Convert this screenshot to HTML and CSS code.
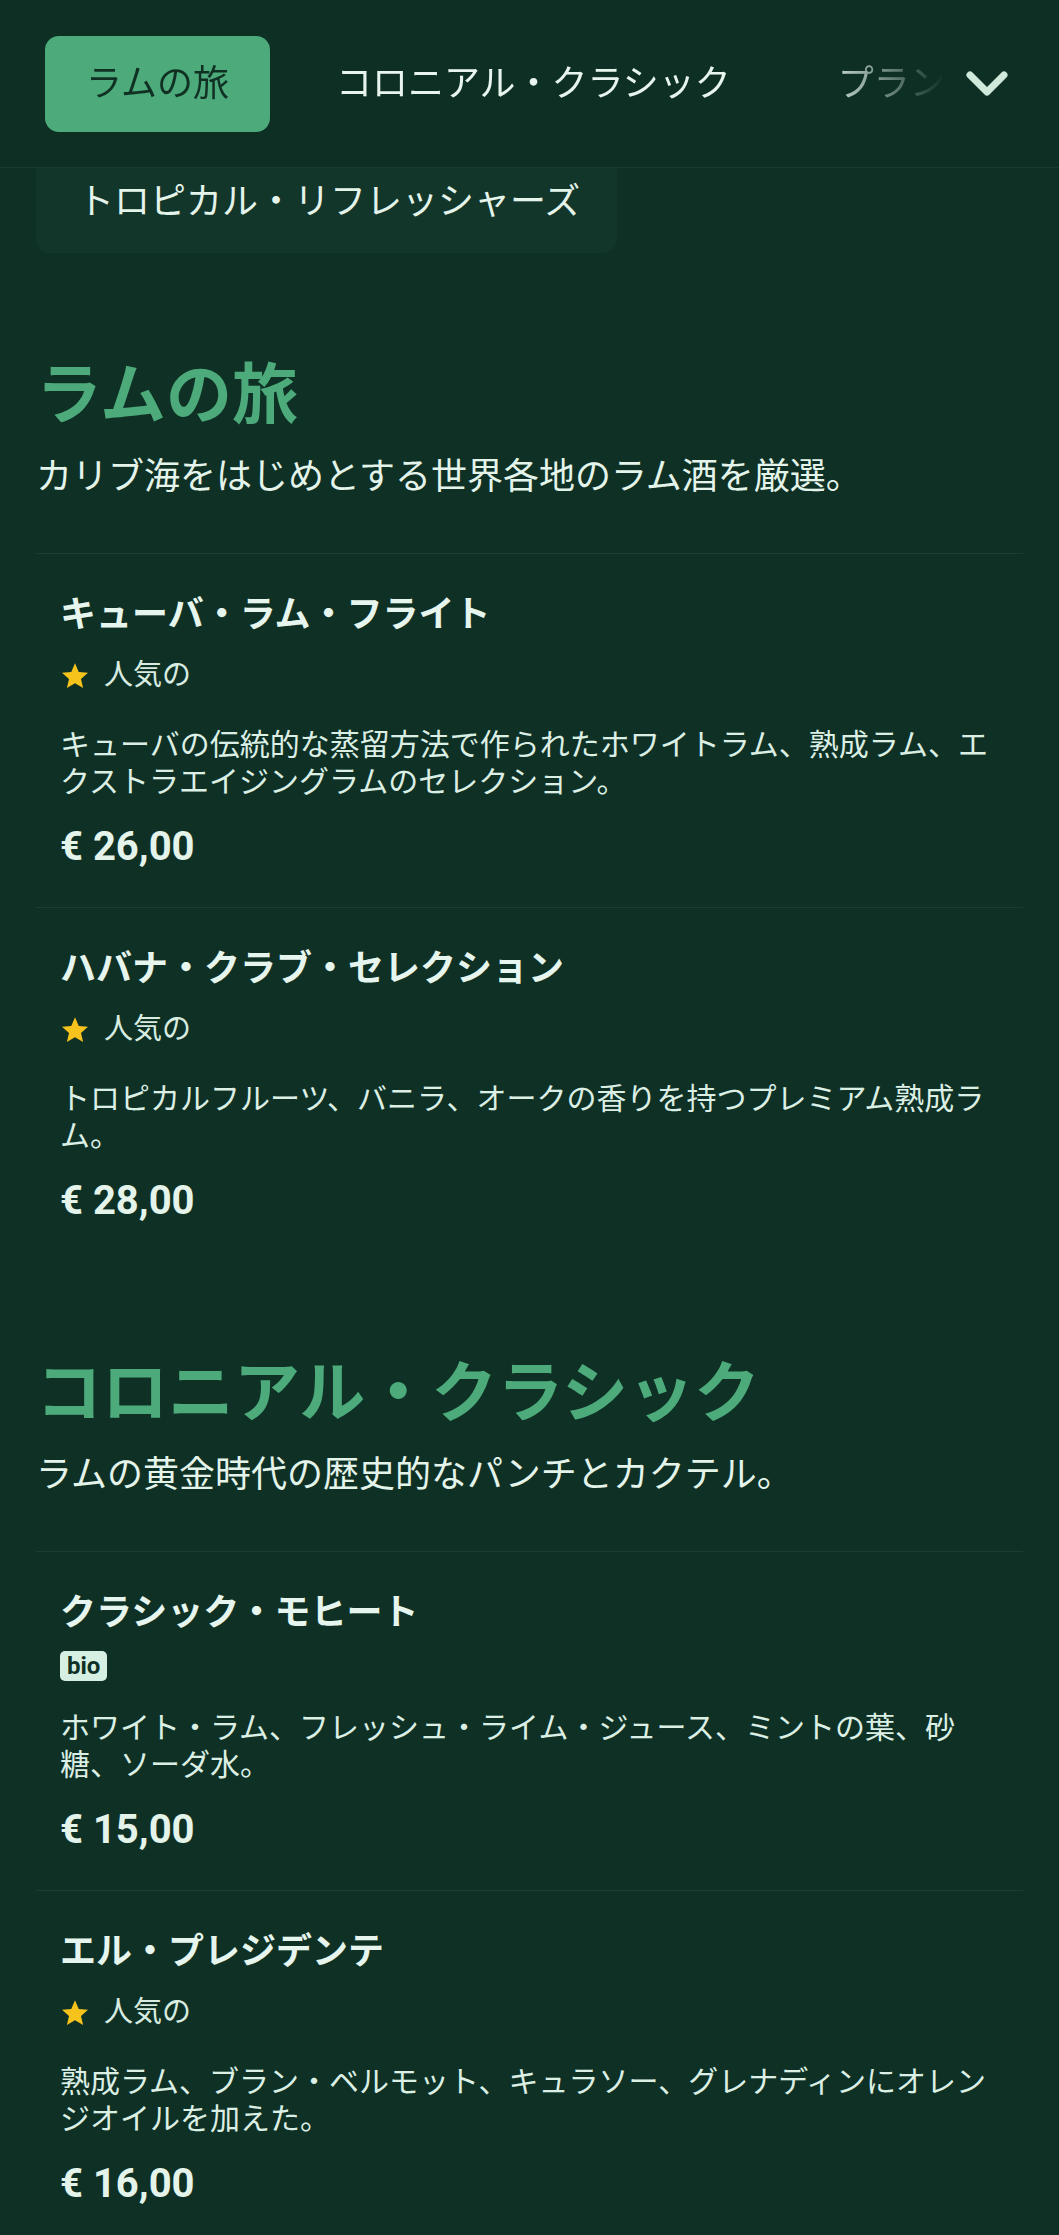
FILE: index.html
```html
<!DOCTYPE html>
<html lang="ja">
<head>
<meta charset="utf-8">
<title>メニュー</title>
<link rel="stylesheet" href="styles.css">
</head>
<body>
<header class="topbar">
  <nav class="tabs">
    <span class="tab tab-active">ラムの旅</span>
    <span class="tab">コロニアル・クラシック</span>
    <span class="tab">プランターズ・パンチ</span>
  </nav>
  <button class="more" aria-label="more">
    <svg width="42" height="27" viewBox="0 0 42 27"><polyline points="4,4 21,21 38,4" fill="none" stroke="#cfeadb" stroke-width="7" stroke-linecap="round" stroke-linejoin="round"/></svg>
  </button>
</header>

<div class="cats">
  <span class="cat">トロピカル・リフレッシャーズ</span>
</div>

<section class="section">
  <h2 class="section-title">ラムの旅</h2>
  <p class="section-sub">カリブ海をはじめとする世界各地のラム酒を厳選。</p>
  <div class="items">
    <article class="item">
      <h3 class="item-title">キューバ・ラム・フライト</h3>
      <div class="tags"><span class="popular"><svg class="star" width="30" height="30" viewBox="0 0 24 24"><path d="M12 1.8l3 7 7.4.6-5.6 4.9 1.7 7.3L12 17.7l-6.5 3.9 1.7-7.3-5.6-4.9 7.4-.6z" fill="#f6c21c"/></svg>人気の</span></div>
      <p class="item-desc">キューバの伝統的な蒸留方法で作られたホワイトラム、熟成ラム、エクストラエイジングラムのセレクション。</p>
      <div class="price">€ 26,00</div>
    </article>
    <article class="item">
      <h3 class="item-title">ハバナ・クラブ・セレクション</h3>
      <div class="tags"><span class="popular"><svg class="star" width="30" height="30" viewBox="0 0 24 24"><path d="M12 1.8l3 7 7.4.6-5.6 4.9 1.7 7.3L12 17.7l-6.5 3.9 1.7-7.3-5.6-4.9 7.4-.6z" fill="#f6c21c"/></svg>人気の</span></div>
      <p class="item-desc">トロピカルフルーツ、バニラ、オークの香りを持つプレミアム熟成ラム。</p>
      <div class="price">€ 28,00</div>
    </article>
  </div>
</section>

<section class="section">
  <h2 class="section-title">コロニアル・クラシック</h2>
  <p class="section-sub">ラムの黄金時代の歴史的なパンチとカクテル。</p>
  <div class="items">
    <article class="item">
      <h3 class="item-title">クラシック・モヒート</h3>
      <div class="tags"><span class="bio">bio</span></div>
      <p class="item-desc">ホワイト・ラム、フレッシュ・ライム・ジュース、ミントの葉、砂糖、ソーダ水。</p>
      <div class="price">€ 15,00</div>
    </article>
    <article class="item">
      <h3 class="item-title">エル・プレジデンテ</h3>
      <div class="tags"><span class="popular"><svg class="star" width="30" height="30" viewBox="0 0 24 24"><path d="M12 1.8l3 7 7.4.6-5.6 4.9 1.7 7.3L12 17.7l-6.5 3.9 1.7-7.3-5.6-4.9 7.4-.6z" fill="#f6c21c"/></svg>人気の</span></div>
      <p class="item-desc">熟成ラム、ブラン・ベルモット、キュラソー、グレナディンにオレンジオイルを加えた。</p>
      <div class="price">€ 16,00</div>
    </article>
  </div>
</section>
</body>
</html>
```

FILE: styles.css
```css
html, body {
  margin: 0;
  padding: 0;
}

body {
  background: #0f3125;
  color: #e4f4eb;
  font-family: Roboto, "Noto Sans CJK JP", "Noto Sans", sans-serif;
}

.topbar {
  display: flex;
  align-items: center;
  background: #0e3024;
  padding: 36px 30px 35px 45px;
  border-bottom: 1px solid #173b2d;
}

.tabs {
  flex: 1;
  min-width: 0;
  display: flex;
  gap: 25px;
  overflow: hidden;
  -webkit-mask-image: linear-gradient(90deg, #000 calc(100% - 130px), transparent 100%);
  mask-image: linear-gradient(90deg, #000 calc(100% - 130px), transparent 100%);
}

.tab {
  flex-shrink: 0;
  white-space: nowrap;
  height: 96px;
  line-height: 96px;
  padding: 0 41px;
  border-radius: 14px;
  font-size: 36px;
  color: #e8f5ee;
}

.tab-active {
  background: #4daa7b;
  color: #0f3022;
}

.more {
  flex-shrink: 0;
  width: 84px;
  height: 96px;
  padding: 0;
  border: 0;
  background: transparent;
  display: flex;
  align-items: center;
  justify-content: center;
}

.cats {
  padding: 0 36px;
  margin-bottom: 10px;
}

.cat {
  display: inline-block;
  background: #13362a;
  border-radius: 0 0 14px 14px;
  padding: 10px 37px 27px 42px;
  font-size: 36px;
  line-height: 48px;
  color: #e4f4eb;
}

.section {
  padding: 94px 36px 0;
}

.section-title {
  margin: 0 0 18px;
  font-size: 66px;
  line-height: 77px;
  font-weight: 700;
  color: #4daa7b;
}

.section-sub {
  margin: 0 0 51px;
  font-size: 36px;
  line-height: 50px;
  color: #e4f4eb;
}

.item {
  border-top: 1px solid #1a3f31;
  padding: 37px 24px 35px;
}

.item-title {
  margin: 0;
  font-size: 36px;
  line-height: 48px;
  font-weight: 700;
  color: #e6f5ed;
}

.tags {
  margin-top: 14px;
  display: flex;
  align-items: center;
}

.popular {
  display: flex;
  align-items: center;
  gap: 14px;
  font-size: 29px;
  line-height: 45px;
  color: #d8ece1;
}

.star {
  display: block;
}

.bio {
  display: block;
  height: 30px;
  line-height: 30px;
  padding: 0 7px;
  border-radius: 5px;
  background: #d5efe2;
  color: #0f3024;
  font-size: 24px;
  font-weight: 700;
}

.item-desc {
  margin: 28px 0 0;
  font-size: 30px;
  line-height: 37px;
  color: #dcefe5;
}

.price {
  margin-top: 22px;
  font-size: 40px;
  line-height: 50px;
  font-weight: 700;
  color: #e4f4eb;
}
```
